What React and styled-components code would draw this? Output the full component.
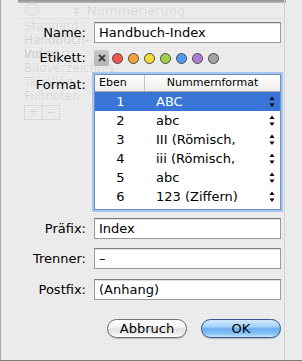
import React from "react";
import styled, { createGlobalStyle } from "styled-components";

const GlobalStyle = createGlobalStyle`
  html, body {
    margin: 0;
    padding: 0;
    background: #ececec;
  }
  body {
    font-family: "DejaVu Sans", "Liberation Sans", sans-serif;
    -webkit-font-smoothing: antialiased;
  }
`;

const Sheet = styled.div`
  position: relative;
  width: 302px;
  height: 361px;
  box-sizing: border-box;
  overflow: hidden;
  border-left: 1px solid #a9a9a9;
  border-bottom: 1px solid #7d7d7d;
  background: repeating-linear-gradient(
    to bottom,
    #eeeeee 0px,
    #eeeeee 1px,
    #e8e8e8 1px,
    #e8e8e8 2px
  );
`;

const TopEdge = styled.div`
  position: absolute;
  left: 17px;
  top: 0;
  width: 268px;
  height: 3px;
  background: linear-gradient(#8f8f8f, #b9b9b9);
`;

const RightEdge = styled.div`
  position: absolute;
  left: 283px;
  top: 0;
  bottom: 0;
  width: 1px;
  background: #d2d2d2;
`;

/* ghost of the window behind the sheet */
const Ghost = styled.div`
  position: absolute;
  left: 18px;
  top: 3px;
  width: 266px;
  color: rgba(0, 0, 0, 0.09);
  font-size: 12px;
  pointer-events: none;
`;

const GhostToolbar = styled.div`
  display: flex;
  align-items: center;
  height: 15px;
  padding-left: 6px;
  border-bottom: 1px solid rgba(0, 0, 0, 0.04);
`;

const GhostTool = styled.span`
  width: ${(p) => p.$w}px;
  font-size: 13px;
  line-height: 15px;
`;

const GhostList = styled.div`
  display: flex;
  flex-direction: column;
  padding: 0 0 0 5px;
  width: 80px;
`;

const GhostItem = styled.span`
  height: 14px;
  line-height: 14px;
  color: ${(p) => (p.$sel ? "rgba(0,0,0,0.13)" : "inherit")};
`;

const GhostButtons = styled.div`
  display: flex;
  margin-top: 2px;
  width: 34px;
  height: 13px;
  border: 1px solid rgba(0, 0, 0, 0.07);
  & > span {
    flex: 1;
    text-align: center;
    font-size: 12px;
    line-height: 13px;
  }
  & > span + span {
    border-left: 1px solid rgba(0, 0, 0, 0.07);
  }
`;

const Form = styled.div`
  position: relative;
  display: grid;
  grid-template-columns: 85px 187px;
  column-gap: 8px;
  padding-top: 22px;
`;

const Label = styled.div`
  text-align: right;
  font-size: 13px;
  color: #000;
  height: ${(p) => p.$h || 21}px;
  line-height: ${(p) => p.$lh || 21}px;
  margin-top: ${(p) => p.$mt || 0}px;
`;

const Field = styled.div`
  margin-top: ${(p) => p.$mt || 0}px;
`;

const TextInput = styled.div`
  box-sizing: border-box;
  height: 21px;
  padding: 0 4px;
  background: #fff;
  border: 1px solid #9a9a9a;
  border-top-color: #7c7c7c;
  box-shadow: inset 0 1px 0 #e0e0e0;
  font-size: 13px;
  line-height: 19px;
  color: #000;
  white-space: nowrap;
`;

const Swatches = styled.div`
  display: flex;
  align-items: center;
  height: 16px;
  gap: 5px;
`;

const NoLabel = styled.div`
  width: 15px;
  height: 16px;
  border-radius: 2px;
  background: linear-gradient(#c9c9c9, #b4b4b4);
  display: flex;
  align-items: center;
  justify-content: center;
  margin-right: -2px;
`;

const Dot = styled.div`
  box-sizing: border-box;
  width: 11px;
  height: 11px;
  border-radius: 50%;
  border: 1px solid #4a4a4a;
  background: ${(p) => p.$c};
`;

const TableWrap = styled.div`
  box-sizing: border-box;
  height: 136px;
  border: 1px solid #6e8fc4;
  box-shadow: 0 0 0 2px #a7c6ee;
  background: #fff;
  overflow: hidden;
`;

const HeaderRow = styled.div`
  display: grid;
  grid-template-columns: 49px 1fr;
  height: 16px;
  background: linear-gradient(#ffffff, #ececec);
  border-bottom: 1px solid #a9a9a9;
  font-size: 11px;
  line-height: 16px;
  color: #000;
`;

const HeaderCell = styled.div`
  padding-left: ${(p) => (p.$center ? 0 : 4)}px;
  text-align: ${(p) => (p.$center ? "center" : "left")};
  border-left: ${(p) => (p.$center ? "1px solid #c4c4c4" : "none")};
`;

const Row = styled.div`
  display: grid;
  grid-template-columns: 49px 1fr 11px;
  height: 19px;
  align-items: center;
  font-size: 13px;
  background: ${(p) => (p.$sel ? "#3875d7" : "#fff")};
  color: ${(p) => (p.$sel ? "#fff" : "#000")};
`;

const Num = styled.div`
  text-align: center;
  padding-left: 2px;
`;

const Fmt = styled.div`
  padding-left: 12px;
  white-space: nowrap;
  overflow: hidden;
`;

const Stepper = styled.svg`
  display: block;
`;

const Buttons = styled.div`
  display: flex;
  justify-content: flex-end;
  gap: 14px;
  padding: 19px 21px 0 0;
`;

const PillButton = styled.div`
  box-sizing: border-box;
  width: 80px;
  height: 19px;
  border-radius: 10px;
  font-size: 13px;
  line-height: 17px;
  text-align: center;
  color: #000;
  border: 1px solid ${(p) => (p.$primary ? "#34558f" : "#6f6f6f")};
  background: ${(p) =>
    p.$primary
      ? "linear-gradient(#d3eafd 0%, #a3d0f8 40%, #6caef0 52%, #86c2f7 80%, #c6e6fe 100%)"
      : "linear-gradient(#ffffff 0%, #f5f5f5 40%, #e2e2e2 52%, #eeeeee 80%, #ffffff 100%)"};
  box-shadow: 0 1px 1px rgba(0, 0, 0, 0.2);
`;

const rows = [
  ["1", "ABC"],
  ["2", "abc"],
  ["3", "III (Römisch,"],
  ["4", "iii (Römisch,"],
  ["5", "abc"],
  ["6", "123 (Ziffern)"],
];

const colors = [
  "#f25450",
  "#f6a23a",
  "#f0dc34",
  "#9ed044",
  "#4f9df2",
  "#b27cd6",
  "#a3a3a3",
];

function Arrows() {
  return (
    <Stepper width="6" height="13" viewBox="0 0 6 13">
      <path d="M3 1.5 L5.5 5 L0.5 5 Z" fill="#000" />
      <path d="M0.5 8.5 L5.5 8.5 L3 12 Z" fill="#000" />
    </Stepper>
  );
}

export default function App() {
  return (
    <>
      <GlobalStyle />
      <Sheet>
        <Ghost>
          <GhostToolbar>
            <GhostTool $w={48}>
              <svg width="14" height="14" viewBox="0 0 14 14">
                <circle cx="7" cy="7" r="6" fill="none" stroke="rgba(0,0,0,0.09)" />
                <circle cx="5" cy="6" r="1" fill="rgba(0,0,0,0.09)" />
                <circle cx="9" cy="6" r="1" fill="rgba(0,0,0,0.09)" />
              </svg>
            </GhostTool>
            <GhostTool $w={14}>‡</GhostTool>
            <GhostTool $w={100}>Nummerierung</GhostTool>
          </GhostToolbar>
          <GhostList>
            <GhostItem>Standard</GhostItem>
            <GhostItem $sel>Handbuch-Index</GhostItem>
            <GhostItem>Vorwort</GhostItem>
            <GhostItem>Bildverzeichnis</GhostItem>
            <GhostItem>Tabellen</GhostItem>
            <GhostItem>Fußnoten</GhostItem>
            <GhostButtons>
              <span>+</span>
              <span>−</span>
            </GhostButtons>
          </GhostList>
        </Ghost>
        <TopEdge />
        <RightEdge />

        <Form>
          <Label>Name:</Label>
          <Field>
            <TextInput>Handbuch-Index</TextInput>
          </Field>

          <Label $mt={7} $h={16} $lh={16}>Etikett:</Label>
          <Field $mt={7}>
            <Swatches>
              <NoLabel>
                <svg width="8" height="8" viewBox="0 0 8 8">
                  <path d="M1 1 L7 7 M7 1 L1 7" stroke="#3c3c3c" strokeWidth="1.8" />
                </svg>
              </NoLabel>
              {colors.map((c) => (
                <Dot key={c} $c={c} />
              ))}
            </Swatches>
          </Field>

          <Label $mt={8}>Format:</Label>
          <Field $mt={8}>
            <TableWrap>
              <HeaderRow>
                <HeaderCell>Eben</HeaderCell>
                <HeaderCell $center>Nummernformat</HeaderCell>
              </HeaderRow>
              {rows.map(([n, f], i) => (
                <Row key={n} $sel={i === 0}>
                  <Num>{n}</Num>
                  <Fmt>{f}</Fmt>
                  <Arrows />
                </Row>
              ))}
            </TableWrap>
          </Field>

          <Label $mt={8}>Präfix:</Label>
          <Field $mt={8}>
            <TextInput>Index</TextInput>
          </Field>

          <Label $mt={9}>Trenner:</Label>
          <Field $mt={9}>
            <TextInput>–</TextInput>
          </Field>

          <Label $mt={10}>Postfix:</Label>
          <Field $mt={10}>
            <TextInput>(Anhang)</TextInput>
          </Field>
        </Form>

        <Buttons>
          <PillButton>Abbruch</PillButton>
          <PillButton $primary>OK</PillButton>
        </Buttons>
      </Sheet>
    </>
  );
}
